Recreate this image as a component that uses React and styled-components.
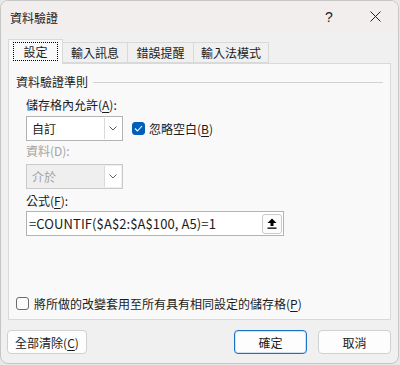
import React from "react";
import styled, { createGlobalStyle } from "styled-components";

const GlobalStyle = createGlobalStyle`
  html, body {
    margin: 0;
    padding: 0;
    background: #e8e8e8;
  }
  body {
    font-family: "Noto Sans CJK TC", "Microsoft JhengHei UI", sans-serif;
    font-size: 12px;
    color: #1b1b1b;
  }
`;

const Window = styled.div`
  width: 399px;
  height: 364px;
  box-sizing: border-box;
  border: 1px solid #c6c6c6;
  border-radius: 8px;
  overflow: hidden;
  background: #f0f0f0;
  display: flex;
  flex-direction: column;
`;

const TitleBar = styled.div`
  height: 31px;
  flex: none;
  display: flex;
  align-items: center;
  background: #f3eeee;
`;

const Title = styled.div`
  flex: 1;
  padding-left: 9px;
  font-size: 12px;
  line-height: 15px;
  padding-top: 1px;
`;

const CaptionButton = styled.div`
  width: 46px;
  height: 31px;
  display: flex;
  align-items: center;
  justify-content: center;
  font-family: "Liberation Sans", sans-serif;
  font-size: 14px;
  color: #222;
`;

const Body = styled.div`
  flex: 1;
  display: flex;
  flex-direction: column;
  padding: 7px 7px 0 7px;
`;

const TabRow = styled.div`
  display: flex;
  align-items: flex-end;
  height: 24px;
  position: relative;
  z-index: 1;
`;

const Tab = styled.div`
  box-sizing: border-box;
  width: ${(p) => p.$w}px;
  height: ${(p) => (p.$active ? 25 : 21)}px;
  margin-bottom: ${(p) => (p.$active ? -1 : 0)}px;
  margin-left: ${(p) => (p.$first ? 0 : -1)}px;
  border: 1px solid #d9d9d9;
  border-bottom: ${(p) => (p.$active ? "none" : "1px solid #d9d9d9")};
  background: ${(p) => (p.$active ? "#f9f9f9" : "#f0f0f0")};
  display: flex;
  align-items: center;
  justify-content: center;
  line-height: 15px;
  padding-bottom: ${(p) => (p.$active ? 1 : 0)}px;
`;

const FocusRing = styled.span`
  border: 1px dotted #000;
  padding: 1px 9px;
  line-height: 15px;
`;

const Panel = styled.div`
  box-sizing: border-box;
  height: 257px;
  flex: none;
  background: #f9f9f9;
  border: 1px solid #d9d9d9;
  display: flex;
  flex-direction: column;
  padding: 10px 7px 8px 7px;
`;

const GroupHeader = styled.div`
  display: flex;
  align-items: center;
  gap: 5px;
  line-height: 15px;
  height: 15px;
`;

const GroupLine = styled.div`
  flex: 1;
  height: 1px;
  background: #d2d2d2;
  margin-top: 1px;
`;

const Fields = styled.div`
  display: flex;
  flex-direction: column;
  padding-left: 10px;
`;

const FieldLabel = styled.div`
  line-height: 15px;
  margin-top: ${(p) => p.$mt}px;
  color: ${(p) => (p.$disabled ? "#a3a3a3" : "#1b1b1b")};
`;

const Key = styled.span`
  text-decoration: underline;
  text-underline-offset: 2px;
`;

const Row = styled.div`
  display: flex;
  align-items: center;
  gap: 9px;
  margin-top: ${(p) => p.$mt}px;
`;

const Combo = styled.div`
  box-sizing: border-box;
  width: 97px;
  height: 25px;
  display: flex;
  border: 1px solid ${(p) => (p.$disabled ? "#c9c9c9" : "#b3b3b3")};
  background: ${(p) => (p.$disabled ? "#efefef" : "#ffffff")};
  color: ${(p) => (p.$disabled ? "#a3a3a3" : "#1b1b1b")};
`;

const ComboText = styled.div`
  flex: 1;
  display: flex;
  align-items: center;
  padding-left: 5px;
  line-height: 15px;
`;

const ComboArrow = styled.div`
  width: 16px;
  margin: 1px;
  border-left: 1px solid #dadada;
  background: #ffffff;
  display: flex;
  align-items: center;
  justify-content: center;
`;

const CheckLabel = styled.label`
  display: flex;
  align-items: center;
  gap: 4px;
  line-height: 15px;
`;

const Box = styled.span`
  box-sizing: border-box;
  flex: none;
  width: 13px;
  height: 13px;
  border-radius: 3px;
  display: flex;
  align-items: center;
  justify-content: center;
  background: ${(p) => (p.$checked ? "#005fb8" : "#fbfbfb")};
  border: 1px solid ${(p) => (p.$checked ? "#005fb8" : "#6b6b6b")};
`;

const FormulaBox = styled.div`
  box-sizing: border-box;
  width: 258px;
  height: 25px;
  margin-top: 3px;
  border: 1px solid #b3b3b3;
  background: #fff;
  display: flex;
  align-items: center;
  padding: 0 1px 0 2px;
`;

const FormulaText = styled.div`
  flex: 1;
  font-size: 13px;
  line-height: 16px;
  letter-spacing: 0.1px;
`;

const RefButton = styled.div`
  box-sizing: border-box;
  width: 20px;
  height: 20px;
  border: 1px solid #c9c9c9;
  border-radius: 3px;
  background: #fdfdfd;
  display: flex;
  align-items: center;
  justify-content: center;
`;

const BottomCheck = styled(CheckLabel)`
  margin-top: auto;
  gap: 5px;
`;

const Footer = styled.div`
  display: flex;
  align-items: center;
  margin-top: 10px;
  margin-left: -1px;
`;

const Button = styled.div`
  box-sizing: border-box;
  width: ${(p) => p.$w}px;
  height: 24px;
  margin-left: ${(p) => p.$ml || 0}px;
  border: 1px solid ${(p) => (p.$primary ? "#1a73c2" : "#d0d0d0")};
  border-radius: 4px;
  background: #fdfdfd;
  display: flex;
  align-items: center;
  justify-content: center;
  line-height: 15px;
  box-shadow: ${(p) => (p.$primary ? "inset 0 0 0 1px #cfe1f3" : "none")};
`;

const Spacer = styled.div`
  flex: 1;
`;

function Chevron({ color }) {
  return (
    <svg width="8" height="5" viewBox="0 0 8 5">
      <path d="M0.5 0.5 L4 4 L7.5 0.5" fill="none" stroke={color} strokeWidth="1" />
    </svg>
  );
}

export default function App() {
  return (
    <>
      <GlobalStyle />
      <Window>
        <TitleBar>
          <Title>資料驗證</Title>
          <CaptionButton>?</CaptionButton>
          <CaptionButton>
            <svg width="11" height="11" viewBox="0 0 11 11">
              <path d="M0.5 0.5 L10.5 10.5 M10.5 0.5 L0.5 10.5" stroke="#222" strokeWidth="1" />
            </svg>
          </CaptionButton>
        </TitleBar>
        <Body>
          <TabRow>
            <Tab $active $first $w={55}>
              <FocusRing>設定</FocusRing>
            </Tab>
            <Tab $w={66}>輸入訊息</Tab>
            <Tab $w={67}>錯誤提醒</Tab>
            <Tab $w={76}>輸入法模式</Tab>
          </TabRow>
          <Panel>
            <GroupHeader>
              <span>資料驗證準則</span>
              <GroupLine />
            </GroupHeader>
            <Fields>
              <FieldLabel $mt={8}>
                儲存格內允許(<Key>A</Key>):
              </FieldLabel>
              <Row $mt={4}>
                <Combo>
                  <ComboText>自訂</ComboText>
                  <ComboArrow>
                    <Chevron color="#555" />
                  </ComboArrow>
                </Combo>
                <CheckLabel>
                  <Box $checked>
                    <svg width="9" height="7" viewBox="0 0 9 7">
                      <path d="M1 3.5 L3.5 6 L8 1" fill="none" stroke="#fff" strokeWidth="1.1" />
                    </svg>
                  </Box>
                  <span>
                    忽略空白(<Key>B</Key>)
                  </span>
                </CheckLabel>
              </Row>
              <FieldLabel $mt={2} $disabled>
                資料(D):
              </FieldLabel>
              <Row $mt={6}>
                <Combo $disabled>
                  <ComboText>介於</ComboText>
                  <ComboArrow>
                    <Chevron color="#666" />
                  </ComboArrow>
                </Combo>
              </Row>
              <FieldLabel $mt={4}>
                公式(<Key>F</Key>):
              </FieldLabel>
              <FormulaBox>
                <FormulaText>=COUNTIF($A$2:$A$100, A5)=1</FormulaText>
                <RefButton>
                  <svg width="10" height="11" viewBox="0 0 10 11">
                    <path d="M5 0.5 L9.5 5 L6.5 5 L6.5 8 L3.5 8 L3.5 5 L0.5 5 Z" fill="#000" />
                    <rect x="0.5" y="9.5" width="9" height="1.3" fill="#000" />
                  </svg>
                </RefButton>
              </FormulaBox>
            </Fields>
            <BottomCheck>
              <Box />
              <span>
                將所做的改變套用至所有具有相同設定的儲存格(<Key>P</Key>)
              </span>
            </BottomCheck>
          </Panel>
          <Footer>
            <Button $w={80}>
              <span>
                全部清除(<Key>C</Key>)
              </span>
            </Button>
            <Spacer />
            <Button $primary $w={73}>
              確定
            </Button>
            <Button $w={73} $ml={11}>
              取消
            </Button>
          </Footer>
        </Body>
      </Window>
    </>
  );
}
